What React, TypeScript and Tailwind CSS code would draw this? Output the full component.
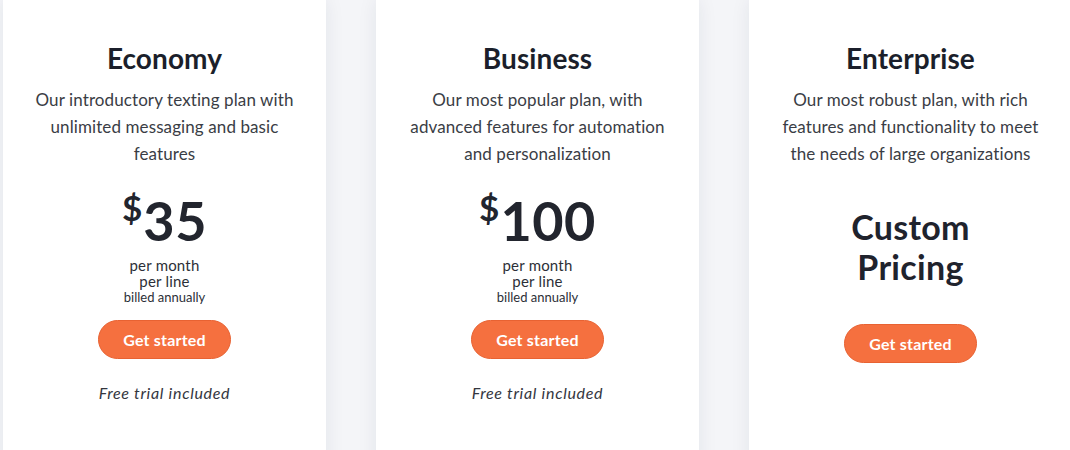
import React from 'react';

interface Plan {
  name: string;
  description: string;
  price?: string;
  trial: boolean;
}

const plans: Plan[] = [
  {
    name: 'Economy',
    description: 'Our introductory texting plan with unlimited messaging and basic features',
    price: '35',
    trial: true,
  },
  {
    name: 'Business',
    description: 'Our most popular plan, with advanced features for automation and personalization',
    price: '100',
    trial: true,
  },
  {
    name: 'Enterprise',
    description: 'Our most robust plan, with rich features and functionality to meet the needs of large organizations',
    trial: false,
  },
];

function PlanCard({ plan }: { plan: Plan }) {
  return (
    <div className="w-[323px] shrink-0 h-[470px] bg-white shadow-[0_0_18px_rgba(30,40,70,0.08)] flex flex-col items-center pt-[41px]">
      {/* Title */}
      <h2 className="text-[28px] leading-[34px] font-bold text-[#1b1f2b] tracking-[0.1px]">{plan.name}</h2>

      {/* Description */}
      <p className="mt-[11px] px-[26px] text-center text-[17px] leading-[27px] text-[#3a3d45] tracking-[0.1px]">
        {plan.description}
      </p>

      {plan.price ? (
        <>
          {/* Price */}
          <div className="mt-[28px] flex items-start text-[#22252e] font-bold">
            <span className="text-[35px] leading-none mt-[-5px] mr-[1px]">$</span>
            <span className="text-[54px] leading-[52px] tracking-[0.5px]">{plan.price}</span>
          </div>
          <div className="mt-[10px] flex flex-col items-center text-[#2c2f37]">
            <span className="text-[15px] leading-[16px] tracking-[0.2px]">per month</span>
            <span className="text-[15px] leading-[16px] tracking-[0.2px]">per line</span>
            <span className="text-[13px] leading-[16px]">billed annually</span>
          </div>
          <button className="mt-[15px] w-[133px] h-[39px] rounded-full bg-[#f5703f] border border-[#e86232] text-white text-[16px] font-bold tracking-[0.2px]">
            Get started
          </button>
          {plan.trial && (
            <p className="mt-[24px] text-[16px] leading-[20px] italic text-[#33363e] tracking-[0.7px]">
              Free trial included
            </p>
          )}
        </>
      ) : (
        <>
          <div className="mt-[40px] flex flex-col items-center text-[34px] leading-[40px] font-bold text-[#1f232d] tracking-[0.3px]">
            <span>Custom</span>
            <span>Pricing</span>
          </div>
          <button className="mt-[37px] w-[133px] h-[39px] rounded-full bg-[#f5703f] border border-[#e86232] text-white text-[16px] font-bold tracking-[0.2px]">
            Get started
          </button>
        </>
      )}
    </div>
  );
}

export default function App() {
  return (
    <div
      className="w-[1070px] h-[450px] overflow-hidden bg-[#f4f5f8] flex gap-[50px] pl-[3px]"
      style={{ fontFamily: 'Lato, "Open Sans", sans-serif' }}
    >
      {plans.map((p) => (
        <PlanCard key={p.name} plan={p} />
      ))}
    </div>
  );
}
